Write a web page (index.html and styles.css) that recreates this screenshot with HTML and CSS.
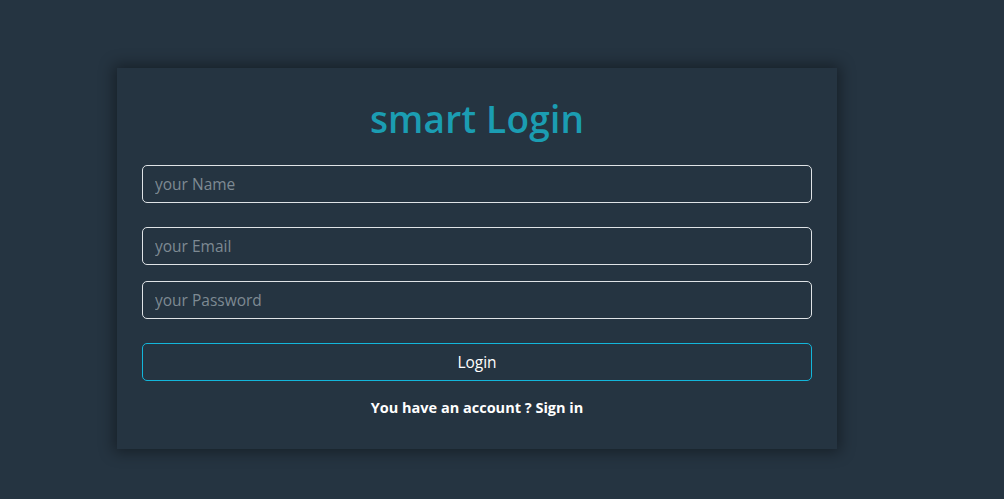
FILE: index.html
```html
<!DOCTYPE html>
<html>
<head>
<meta charset="utf-8">
<link rel="stylesheet" href="styles.css">
</head>
<body>
<div class="page">
  <form class="card">
    <h1 class="title">smart Login</h1>
    <input class="field field-name" type="text" placeholder="your Name">
    <input class="field field-email" type="email" placeholder="your Email">
    <input class="field field-pass" type="password" placeholder="your Password">
    <button class="btn" type="button">Login</button>
    <p class="note">You have an account ? Sign in</p>
  </form>
</div>
</body>
</html>
```

FILE: styles.css
```css
html, body {
  margin: 0;
  padding: 0;
  background: #253441;
  height: 100%;
}
body {
  font-family: "Open Sans", "Noto Sans", sans-serif;
}
.page {
  padding: 68px 0 0 117px;
}
.card {
  width: 670px;
  height: 329px;
  padding: 27px 25px 25px 25px;
  background: #253441;
  box-shadow: 0 0 14px 3px rgba(0, 0, 0, 0.4);
  display: flex;
  flex-direction: column;
}
.title {
  margin: 0 0 22px 0;
  text-align: center;
  font-size: 37px;
  font-weight: 600;
  line-height: 48px;
  color: #1b9db2;
  letter-spacing: 0.2px;
}
.field {
  box-sizing: border-box;
  height: 38px;
  width: 100%;
  border: 1px solid #dfe3e6;
  border-radius: 5px;
  background: transparent;
  padding: 0 12px;
  font-family: inherit;
  font-size: 15.5px;
  color: #fff;
  outline: none;
}
.field::placeholder {
  color: #7e8a93;
}
.field-email {
  margin-top: 24px;
}
.field-pass {
  margin-top: 16px;
}
.btn {
  margin-top: 24px;
  box-sizing: border-box;
  height: 38px;
  width: 100%;
  border: 1px solid #13b6da;
  border-radius: 5px;
  background: transparent;
  color: #fff;
  font-family: inherit;
  font-size: 15.5px;
}
.note {
  margin: 17px 0 0 0;
  text-align: center;
  color: #fff;
  font-weight: 700;
  font-size: 14.5px;
  line-height: 20px;
}
```
